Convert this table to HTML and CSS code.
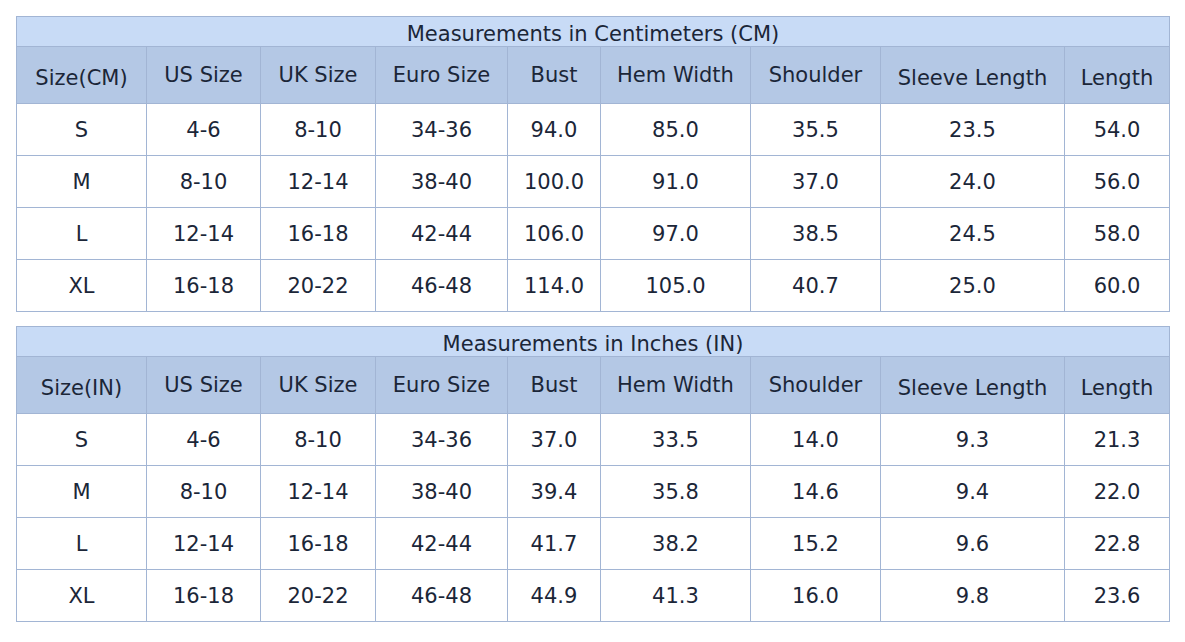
FILE: index.html
```html
<!DOCTYPE html>
<html>
<head>
<meta charset="utf-8">
<link rel="stylesheet" href="styles.css">
</head>
<body>
<div class="page">
<table class="chart">
  <colgroup>
    <col class="c1"><col class="c2"><col class="c3"><col class="c4"><col class="c5"><col class="c6"><col class="c7"><col class="c8"><col class="c9">
  </colgroup>
  <tr class="title"><th colspan="9">Measurements in Centimeters (CM)</th></tr>
  <tr class="head">
    <th class="low">Size(CM)</th><th>US Size</th><th>UK Size</th><th>Euro Size</th><th>Bust</th><th>Hem Width</th><th>Shoulder</th><th class="low">Sleeve Length</th><th class="low">Length</th>
  </tr>
  <tr><td>S</td><td>4-6</td><td>8-10</td><td>34-36</td><td>94.0</td><td>85.0</td><td>35.5</td><td>23.5</td><td>54.0</td></tr>
  <tr><td>M</td><td>8-10</td><td>12-14</td><td>38-40</td><td>100.0</td><td>91.0</td><td>37.0</td><td>24.0</td><td>56.0</td></tr>
  <tr><td>L</td><td>12-14</td><td>16-18</td><td>42-44</td><td>106.0</td><td>97.0</td><td>38.5</td><td>24.5</td><td>58.0</td></tr>
  <tr><td>XL</td><td>16-18</td><td>20-22</td><td>46-48</td><td>114.0</td><td>105.0</td><td>40.7</td><td>25.0</td><td>60.0</td></tr>
</table>
<table class="chart">
  <colgroup>
    <col class="c1"><col class="c2"><col class="c3"><col class="c4"><col class="c5"><col class="c6"><col class="c7"><col class="c8"><col class="c9">
  </colgroup>
  <tr class="title"><th colspan="9">Measurements in Inches (IN)</th></tr>
  <tr class="head">
    <th class="low">Size(IN)</th><th>US Size</th><th>UK Size</th><th>Euro Size</th><th>Bust</th><th>Hem Width</th><th>Shoulder</th><th class="low">Sleeve Length</th><th class="low">Length</th>
  </tr>
  <tr><td>S</td><td>4-6</td><td>8-10</td><td>34-36</td><td>37.0</td><td>33.5</td><td>14.0</td><td>9.3</td><td>21.3</td></tr>
  <tr><td>M</td><td>8-10</td><td>12-14</td><td>38-40</td><td>39.4</td><td>35.8</td><td>14.6</td><td>9.4</td><td>22.0</td></tr>
  <tr><td>L</td><td>12-14</td><td>16-18</td><td>42-44</td><td>41.7</td><td>38.2</td><td>15.2</td><td>9.6</td><td>22.8</td></tr>
  <tr><td>XL</td><td>16-18</td><td>20-22</td><td>46-48</td><td>44.9</td><td>41.3</td><td>16.0</td><td>9.8</td><td>23.6</td></tr>
</table>
</div>
</body>
</html>
```
FILE: styles.css
```css
html, body {
  margin: 0;
  padding: 0;
  background: #ffffff;
}
.page {
  padding: 16px 16px 0 16px;
  display: flex;
  flex-direction: column;
  gap: 14px;
}
.chart {
  border-collapse: collapse;
  table-layout: fixed;
  width: 1154px;
  font-family: "DejaVu Sans", Verdana, sans-serif;
  font-size: 21px;
  color: #1b2638;
}
.c1 { width: 130px; }
.c2 { width: 114px; }
.c3 { width: 115px; }
.c4 { width: 132px; }
.c5 { width: 93px; }
.c6 { width: 150px; }
.c7 { width: 130px; }
.c8 { width: 184px; }
.c9 { width: 105px; }
.chart th, .chart td {
  border: 1px solid #a2b5d4;
  text-align: center;
  font-weight: normal;
  padding: 0;
  line-height: 24px;
}
.title th {
  background: #c8dbf6;
  height: 25px;
  padding-top: 4px;
}
.head th {
  background: #b4c8e5;
  height: 56px;
}
.head th.low {
  height: 51px;
  padding-top: 5px;
}
.chart td {
  height: 51px;
}
```
